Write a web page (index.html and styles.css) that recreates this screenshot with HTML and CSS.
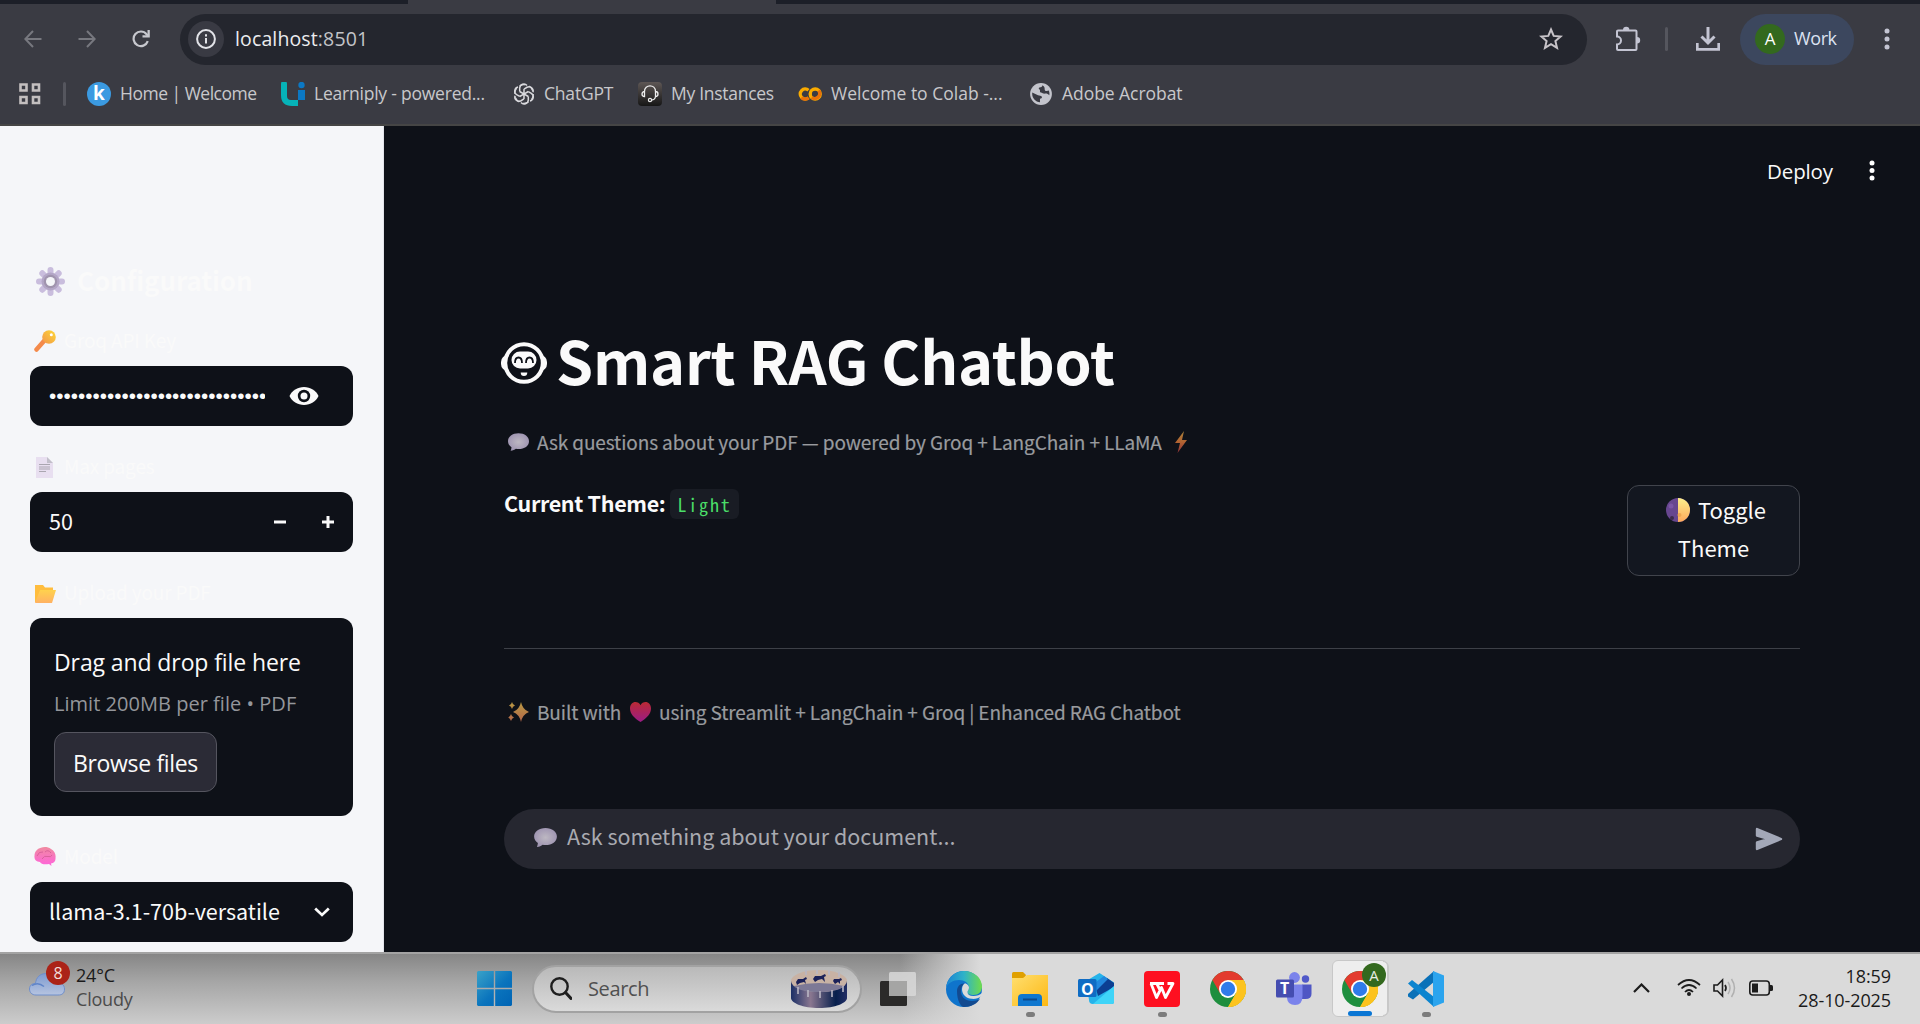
FILE: index.html
```html
<!DOCTYPE html>
<html lang="en">
<head>
<meta charset="utf-8">
<title>Smart RAG Chatbot</title>
<link rel="stylesheet" href="styles.css">
</head>
<body>
<svg width="0" height="0" class="defs" aria-hidden="true">
  <defs>
    <linearGradient id="gKey" x1="1" y1="0" x2="0" y2="1"><stop offset="0" stop-color="#fdd835"/><stop offset="1" stop-color="#f3964a"/></linearGradient>
    <linearGradient id="gFold" x1="0" y1="0" x2="0" y2="1"><stop offset="0" stop-color="#ffd24d"/><stop offset="1" stop-color="#ffb163"/></linearGradient>
    <linearGradient id="gBrain" x1="0" y1="0" x2="0" y2="1"><stop offset="0" stop-color="#f08aa0"/><stop offset="1" stop-color="#ff63dc"/></linearGradient>
    <linearGradient id="gBolt" x1="0" y1="0" x2="0" y2="1"><stop offset="0" stop-color="#a8823a"/><stop offset=".5" stop-color="#b36432"/><stop offset="1" stop-color="#8f3038"/></linearGradient>
    <linearGradient id="gHeart" x1="0" y1="0" x2="0" y2="1"><stop offset="0" stop-color="#bb2a34"/><stop offset="1" stop-color="#9a1c86"/></linearGradient>
    <linearGradient id="gStar" x1="0" y1="0" x2="0" y2="1"><stop offset="0" stop-color="#b99a43"/><stop offset="1" stop-color="#b3654a"/></linearGradient>
    <linearGradient id="gMoon" x1="0" y1="0" x2="0" y2="1"><stop offset="0" stop-color="#fdf08c"/><stop offset="1" stop-color="#ffa95c"/></linearGradient>
    <radialGradient id="gBub"><stop offset="0" stop-color="#bdb8c2"/><stop offset="1" stop-color="#a096b2"/></radialGradient>
    <linearGradient id="gWin" x1="0" y1="0" x2="1" y2="1"><stop offset="0" stop-color="#3aa2c8"/><stop offset=".55" stop-color="#0a74bd"/><stop offset="1" stop-color="#0064b4"/></linearGradient>
    <linearGradient id="gCloud" x1="0" y1="0" x2="0" y2="1"><stop offset="0" stop-color="#7d9ad0"/><stop offset="1" stop-color="#b6c4e0"/></linearGradient>
    <linearGradient id="gEdge" x1="0" y1="0" x2="1" y2="0"><stop offset="0" stop-color="#1a83d4"/><stop offset=".5" stop-color="#2fb2c8"/><stop offset="1" stop-color="#6fdc4a"/></linearGradient>
    <linearGradient id="gExp" x1="0" y1="0" x2="1" y2="1"><stop offset="0" stop-color="#ffdf70"/><stop offset="1" stop-color="#fdb813"/></linearGradient>
    <linearGradient id="gCake" x1="0" y1="0" x2="1" y2="0"><stop offset="0" stop-color="#1b2f66"/><stop offset=".35" stop-color="#8a7790"/><stop offset=".8" stop-color="#071f4c"/><stop offset="1" stop-color="#232e66"/></linearGradient>
    <linearGradient id="gInst" x1="0" y1="0" x2="0" y2="1"><stop offset="0" stop-color="#5e5755"/><stop offset="1" stop-color="#161616"/></linearGradient>
    <symbol id="chrome" viewBox="0 0 36 36">
      <circle cx="18" cy="18" r="18" fill="#1e8e3e"/>
      <path d="M18 18L2.400 9A18 18 0 0 1 33.600 9z" fill="#e33b2e"/>
      <path d="M2.400 9L10.200 22.500 18 18 18 9z" fill="#e33b2e"/>
      <path d="M18 9H33.600A18 18 0 0 1 18 36L25.800 22.500z" fill="#fcc31e"/>
      <path d="M18 36L25.800 22.500 18 18 10.200 22.500z" fill="#1e8e3e"/>
      <path d="M18 36l7.800-13.500L28 14 33.600 9A18 18 0 0 1 18 36z" fill="#fcc31e"/>
      <circle cx="18" cy="18" r="9" fill="#fff"/><circle cx="18" cy="18" r="7.200" fill="#2f7bea"/>
    </symbol>
    <symbol id="bubble" viewBox="0 0 24 20"><path d="M12 0C5 0 0 3.800 0 9c0 3 1.700 5.300 4 6.900-.1 1.600-.5 2.900-1 4.100 2.600-.2 4.600-1.300 6-2.300 1 .2 2 .3 3 .3 7 0 12-3.800 12-9S19 0 12 0z" fill="url(#gBub)"/></symbol>
  </defs>
</svg>

<header class="browser">
  <div class="tabstrip"><i class="tab"></i></div>
  <div class="toolbar">
    <svg class="nav back" viewBox="0 0 18 18"><path d="M17.500 9H1.500M9 1L1.300 9 9 17" fill="none" stroke="#77787f" stroke-width="2"/></svg>
    <svg class="nav fwd" viewBox="0 0 18 18"><path d="M.5 9h16M9 1l7.700 8L9 17" fill="none" stroke="#77787f" stroke-width="2"/></svg>
    <svg class="nav reload" viewBox="0 0 18 18"><path d="M15.800 11.200A7.300 7.300 0 1 1 14.600 4.200L16.500 6.300" fill="none" stroke="#c7c8ce" stroke-width="2.200"/><path d="M17.800 0v7.500h-7.300V5.300h5V0z" fill="#c7c8ce"/></svg>
    <div class="omnibox">
      <span class="info"><svg width="20" height="20" viewBox="0 0 20 20"><circle cx="10" cy="10" r="8.900" fill="none" stroke="#e2e3e8" stroke-width="2"/><path d="M9 9h2v5.500H9zM9 5.200h2v2.200H9z" fill="#e2e3e8"/></svg></span>
      <span class="url"><b>localhost</b>:8501</span>
      <svg class="star" width="24" height="24" viewBox="0 0 24 24"><path d="M12 2.500l2.700 6.400 6.900.6-5.200 4.500 1.600 6.800-6-3.600-6 3.600 1.600-6.800L2.400 9.500l6.900-.6z" fill="none" stroke="#c7c3c8" stroke-width="2"/></svg>
    </div>
    <svg class="puzzle" width="26" height="26" viewBox="0 0 26 26"><path d="M3 4.500h17.500a1 1 0 0 1 1 1V23a1 1 0 0 1-1 1H3a1 1 0 0 1-1-1v-4.500a3.900 3.900 0 0 0 0-8V5.500a1 1 0 0 1 1-1z" fill="none" stroke="#c3c4d2" stroke-width="2"/><path d="M8 4a3.200 3.200 0 0 1 6.400 0zM22 11a3.200 3.200 0 0 1 0 6.400z" fill="#c3c4d2"/></svg>
    <i class="vbar"></i>
    <svg class="download" width="24" height="24" viewBox="0 0 24 24"><path d="M12 0v16M5.500 9.500L12 16l6.500-6.500" fill="none" stroke="#c3c4d2" stroke-width="3"/><path d="M1.300 16v6.300h21.400V16" fill="none" stroke="#c3c4d2" stroke-width="2.700"/></svg>
    <div class="work"><span class="avatar">A</span><span class="worktext">Work</span></div>
    <svg class="menu" width="6" height="22" viewBox="0 0 6 22"><g fill="#c3c4d2"><circle cx="3" cy="3" r="2.500"/><circle cx="3" cy="11" r="2.500"/><circle cx="3" cy="19" r="2.500"/></g></svg>
  </div>
  <nav class="bookmarks">
    <svg class="apps" width="22" height="22" viewBox="0 0 22 22"><path d="M1.500 1.500h6v6h-6zM14 1.500h6v6h-6zM1.500 14h6v6h-6zM14 14h6v6h-6z" fill="none" stroke="#c3bfbf" stroke-width="2.600"/></svg>
    <i class="vbar"></i>
    <a class="bm bm1"><span class="klogo">k</span><span class="bt">Home | Welcome</span></a>
    <a class="bm bm2"><svg width="24" height="24" viewBox="0 0 24 24"><path d="M0 2a3 3 0 0 1 6 0v12q0 4 4 4h7v6h-6Q0 24 0 13z" fill="#06b3b8"/><path d="M17 8h7v10h-7z" fill="#0b78c4"/><circle cx="20.500" cy="3" r="3.200" fill="#0b78c4"/></svg><span class="bt">Learniply - powered...</span></a>
    <a class="bm bm3"><svg width="22" height="22" viewBox="-11 -11 22 22"><g fill="none" stroke="#d9d9dd" stroke-width="1.500"><path d="M-4.300-2.500V-6A4.200 4.200 0 0 1 3-8.600M-4.300-2.500L1 .6"/><path d="M-4.300-2.500V-6A4.200 4.200 0 0 1 3-8.600M-4.300-2.500L1 .6" transform="rotate(60)"/><path d="M-4.300-2.500V-6A4.200 4.200 0 0 1 3-8.600M-4.300-2.500L1 .6" transform="rotate(120)"/><path d="M-4.300-2.500V-6A4.200 4.200 0 0 1 3-8.600M-4.300-2.500L1 .6" transform="rotate(180)"/><path d="M-4.300-2.500V-6A4.200 4.200 0 0 1 3-8.600M-4.300-2.500L1 .6" transform="rotate(240)"/><path d="M-4.300-2.500V-6A4.200 4.200 0 0 1 3-8.600M-4.300-2.500L1 .6" transform="rotate(300)"/><circle r="9.300" stroke-width="1.200" stroke-dasharray="6 3.740"/></g></svg><span class="bt">ChatGPT</span></a>
    <a class="bm bm4"><svg width="24" height="24" viewBox="0 0 24 24"><rect width="24" height="24" rx="4" fill="url(#gInst)"/><path d="M6.500 9.500C6.500 2 17.500 2 17.500 9.500M6.500 9.500a2.500 2.500 0 0 0 0 5zM17.500 9.500a2.500 2.500 0 0 1 0 5zM17.500 14.500q-.5 3.500-4 3.500" fill="none" stroke="#eee" stroke-width="1.300"/><circle cx="12" cy="18" r="1.600" fill="none" stroke="#eee" stroke-width="1.200"/></svg><span class="bt">My Instances</span></a>
    <a class="bm bm5"><svg width="24" height="14" viewBox="0 0 24 14"><path d="M10.500 3.200A5 5 0 1 0 10.500 10.800" fill="none" stroke="#f9ab00" stroke-width="3.400"/><circle cx="17.200" cy="7" r="5" fill="none" stroke="#f9ab00" stroke-width="3.400"/><path d="M3.500 10.500A5 5 0 0 0 10.500 10.800M20.700 3.500A5 5 0 0 1 13.700 10.500" fill="none" stroke="#e8710a" stroke-width="3.400"/></svg><span class="bt">Welcome to Colab -...</span></a>
    <a class="bm bm6"><svg width="22" height="22" viewBox="0 0 22 22"><circle cx="11" cy="11" r="10.900" fill="#c3c4cc"/><path d="M2.200 9.500L8 12.200c1.500.6 3 .3 3.700 1.200.8 1-.2 2.300-1.700 2.400v3.500C5.500 19 2.200 15 2.200 11zM12.500 2.300c-.3 1.700-1.500 2.200-3 2.200-1 0-1 1.700 0 2 1.200.5-.3 2.700 1.300 2.900 1.700.2 2.500 1.500 4.200 1.200 1.500-.3 3 .2 4.300 1.600.3-1.400.2-3-.5-4.600-1.500.7-3.500.7-4-.7-.3-1.500.5-2.700-2.300-4.600z" fill="#393a43"/></svg><span class="bt">Adobe Acrobat</span></a>
  </nav>
</header>

<div class="app">
  <aside class="sidebar">
    <h2 class="side-title"><svg width="29" height="29" viewBox="-14.500 -14.500 29 29"><g stroke="#c9bddd" stroke-width="6" stroke-linecap="round"><path d="M0-11.500V11.500M-11.500 0H11.500M-8.200-8.200L8.200 8.200M-8.200 8.200L8.200-8.200"/></g><circle r="9" fill="#b3a6c6"/><circle r="6.700" fill="#a094ae"/><circle r="4.500" fill="#f5f6f9"/></svg><span class="ghost">Configuration</span></h2>
    <label class="lab"><svg width="22" height="22" viewBox="0 0 22 22"><path d="M10 11L2.500 19.500" stroke="#f48a4b" stroke-width="4.500" stroke-linecap="round"/><circle cx="15" cy="7" r="6.800" fill="url(#gKey)"/><circle cx="17.300" cy="4.700" r="1.500" fill="#fff"/></svg><span class="ghost">Groq API Key</span></label>
    <div class="field"><span class="dots">••••••••••••••••••••••••••••••</span><svg class="eye" width="30" height="20" viewBox="0 0 30 20"><path d="M15 1C8.500 1 3 4.600.5 10 3 15.400 8.500 19 15 19s12-3.600 14.500-9C27 4.600 21.500 1 15 1z" fill="#fafafa"/><circle cx="15" cy="10" r="6.200" fill="#0e1118"/><circle cx="15" cy="10" r="3.500" fill="#fafafa"/></svg></div>
    <label class="lab"><svg width="22" height="22" viewBox="0 0 22 22"><path d="M2 1h11l6 6v15H2z" fill="#e8dff0"/><path d="M13 1l6 6h-6z" fill="#c2bfca"/><path d="M5 8.500h11M5 11h11M5 13h11M5 15.500h7" stroke="#aaa6b0" stroke-width="1.200"/></svg><span class="ghost">Max pages</span></label>
    <div class="field"><span class="val">50</span><svg class="pm" width="60" height="12" viewBox="0 0 60 12"><path d="M0 6h12M48 6h12M54 0v12" stroke="#fafafa" stroke-width="3"/></svg></div>
    <label class="lab"><svg width="22" height="22" viewBox="0 0 22 22"><path d="M1 3h8l2 2.500h8V12L4 20H1z" fill="#ffbd3e"/><path d="M6 8h16l-4 13H1z" fill="url(#gFold)"/></svg><span class="ghost">Upload your PDF</span></label>
    <section class="drop">
      <p class="drag">Drag and drop file here</p>
      <p class="limit">Limit 200MB per file • PDF</p>
      <button class="browse">Browse files</button>
    </section>
    <label class="lab"><svg width="22" height="20" viewBox="0 0 22 20"><path d="M7 .8C10-.4 14-.2 17 2c4 2 5 6 4.500 9 .3 3-1.500 5-4.500 5.500L17.500 19 15 17c-4 .6-8 .5-9-2-4-.5-6-2.500-5.500-6C.5 5 3 1.700 7 .8z" fill="url(#gBrain)"/><path d="M3 9q2-5 6-4M8 12q2-4 6-2.500 3 1 4-1.500M11 5q3-3 6 1" fill="none" stroke="#d9629c" stroke-width="1"/></svg><span class="ghost">Model</span></label>
    <div class="field"><span class="val model">llama-3.1-70b-versatile</span><svg class="chev" width="18" height="12" viewBox="0 0 18 12"><path d="M2.200 2.500L9 9l6.800-6.500" fill="none" stroke="#fafafa" stroke-width="2.700"/></svg></div>
  </aside>

  <main class="main">
    <div class="topbar"><span class="deploy">Deploy</span><svg width="6" height="22" viewBox="0 0 6 22"><g fill="#fff"><circle cx="3" cy="3" r="2.500"/><circle cx="3" cy="10.500" r="2.500"/><circle cx="3" cy="18" r="2.500"/></g></svg></div>
    <div class="content">
      <h1 class="title"><svg width="46" height="42" viewBox="0 0 46 42"><rect x="0" y="13" width="46" height="16" rx="7" fill="#fafafa"/><circle cx="23" cy="21" r="18.800" fill="#0e1118" stroke="#fafafa" stroke-width="4"/><rect x="10.500" y="9.500" width="25" height="17" rx="8.500" fill="#fafafa"/><path d="M14 21q0-5.500 3.500-5.500T21 21M25 21q0-5.500 3.500-5.500T32 21" fill="none" stroke="#0e1118" stroke-width="1.800"/><path d="M19.700 30.500h6.600q0 3.500-3.300 3.500t-3.300-3.500z" fill="#fafafa"/></svg><span>Smart RAG Chatbot</span></h1>
      <p class="caption cap1"><svg width="21" height="18"><use href="#bubble" width="21" height="18"/></svg><span>Ask questions about your PDF — powered by Groq + LangChain + LLaMA</span><svg class="bolt" width="14" height="22" viewBox="0 0 14 22"><path d="M10 0L1 12h5l-2.500 10L13 9H8z" fill="url(#gBolt)"/></svg></p>
      <div class="row">
        <p class="theme"><b>Current Theme:</b><code>Light</code></p>
        <button class="toggle"><span class="tl"><svg width="24" height="24" viewBox="0 0 24 24"><circle cx="12" cy="12" r="12" fill="#67468f"/><path d="M12 0a12 12 0 0 1 0 24z" fill="url(#gMoon)"/><circle cx="6" cy="20" r="2" fill="#3b2a4a"/><circle cx="13.500" cy="17" r="2" fill="#f0a850"/><circle cx="5" cy="8" r="2.500" fill="#7a55a5"/></svg><span>Toggle</span></span><span>Theme</span></button>
      </div>
      <hr>
      <p class="caption cap2"><svg width="21" height="20" viewBox="0 0 21 20"><path d="M13 0q1.500 7.500 8 10-6.500 2.500-8 10-1.500-7.500-8-10 6.500-2.500 8-10zM4 0q.7 3 3 3.500Q4.700 4 4 7 3.300 4 1 3.500 3.300 3 4 0zM3 12q.8 3 3 3.500-2.200.5-3 3.500-.8-3-3-3.500 2.200-.5 3-3.500z" fill="url(#gStar)"/></svg><span class="built">Built with</span><svg width="21" height="20" viewBox="0 0 21 20"><path d="M10.500 20C4 16 0 11.500 0 6.500 0 2.500 2.500 0 5.500 0c2 0 4 1.200 5 3.200 1-2 3-3.200 5-3.200 3 0 5.500 2.500 5.500 6.500 0 5-4 9.500-10.500 13.500z" fill="url(#gHeart)"/></svg><span>using Streamlit + LangChain + Groq | Enhanced RAG Chatbot</span></p>
      <div class="chat"><svg width="23" height="19"><use href="#bubble" width="23" height="19"/></svg><span class="ph">Ask something about your document...</span><svg class="send" width="28" height="24" viewBox="0 0 28 24"><path d="M2 2l24 10L2 22v-6.500L14 12 2 8.500z" fill="#a3a8b8" stroke="#a3a8b8" stroke-width="2.400" stroke-linejoin="round"/></svg></div>
    </div>
  </main>
</div>

<footer class="taskbar">
  <div class="weather"><div class="wicon"><svg width="36" height="23" viewBox="0 0 36 23"><path d="M7 22C3 22 .5 19.500.5 16S3 10.500 6.500 10.500C7 4.500 11 .5 17 .5s9 3.500 10 9c5 0 8.500 2 8.500 6.500S33 22 29 22z" fill="url(#gCloud)" stroke="#6e8ecb"/><path d="M3 12.500q6-4 12 1" fill="none" stroke="#5f84c8" stroke-width="1.500"/></svg><span class="badge">8</span></div><div class="wtext"><span>24°C</span><span class="dim">Cloudy</span></div></div>
  <div class="dock">
    <svg class="win" width="35" height="35" viewBox="0 0 35 35"><path d="M1 0h15.800v16.800H0V1zM18.200 0H34l1 1v15.800H18.200zM0 18.200h16.800V35H1l-1-1zM18.200 18.200H35V34l-1 1H18.200z" fill="url(#gWin)"/></svg>
    <div class="search"><svg width="22" height="23" viewBox="0 0 22 23"><circle cx="9.500" cy="9.500" r="8.200" fill="none" stroke="#1e1e1e" stroke-width="2.400"/><path d="M15.500 15.500L21 21.500" stroke="#1e1e1e" stroke-width="3" stroke-linecap="round"/></svg><span class="stext">Search</span>
      <svg class="cake" width="56" height="38" viewBox="0 0 56 38"><path d="M0 11v17c0 5 12 10 28 10s28-5 28-10V11z" fill="url(#gCake)"/><ellipse cx="28" cy="11" rx="28" ry="11" fill="#c8b2a4"/><path d="M3 16Q28 10 53 16 47 22 28 22T3 16z" fill="#7d7996"/><path d="M7 17v7M17 20v7M29 21v7M41 20v7M52 16v6M15 0v5M26-1v5M38 0v5M48 2v5" stroke="#b9b6c4" stroke-width="1.600"/><path d="M5 12l2-3h5l3-2 1 2-2 1 1 4-2-2-4 1-3 2zM22 9l2-3h6l4-2 1 2-2 1 1 5-3-3-4 1-3 2zM42 11l1-2h5l2-1 1 2-2 1v3l-2-2-3 2z" fill="#1b2159"/></svg></div>
    <svg class="tv" width="36" height="34" viewBox="0 0 36 34"><rect y="9" width="27" height="25" rx="1.500" fill="#2b2a29"/><rect x="9" y="0" width="27" height="24" rx="1.500" fill="#d8d8d8" fill-opacity=".85"/><rect x="9" y="9" width="18" height="15" fill="#a5a5a4"/></svg>
    <div class="ic"><svg width="36" height="36" viewBox="0 0 36 36"><circle cx="18" cy="18" r="18" fill="#0f74cc"/><path d="M0 17C1 7 9 0 18 0c10 0 18 7 18 15.500 0 5-3.500 8.500-8.500 8.500-3.500 0-6-1-6-3 0-1.500 1.500-2 1.500-4.500C23 12 18.500 9 13 9 7 9 2 12 0 17z" fill="url(#gEdge)"/><path d="M11 20c0-5 3.500-8 8-7.500-6 2.500-6.500 17.500 7 17.500 3 0 5.500-.8 8-2.200C31 33 25 36 18 36c-3 0-7-6-7-16z" fill="#124a90"/><path d="M19 12.300c-5 3-4 14.500 6.500 15.500 4 .4 7-.8 9.500-2.300l1 1.500V22c-2 2-5 3-8.500 3-4 0-6-1.500-6-4 0-1.500 1.500-2 1.500-4.500 0-1.700-1.500-3.600-4-4.200z" fill="#dadada"/></svg></div>
    <div class="ic"><svg width="36" height="34" viewBox="0 0 36 34"><path d="M0 1.500Q0 0 1.500 0H11l3 3-2 4H0z" fill="#e0a000"/><path d="M0 6h11l4-3h21v31H0z" fill="url(#gExp)"/><path d="M6 34V26q0-4 4-4h16q4 0 4 4v8z" fill="#0f77cf"/><path d="M11 27.500h14" stroke="#0a4b8e" stroke-width="2"/></svg><i class="run"></i></div>
    <div class="ic"><svg width="36" height="32" viewBox="0 0 36 32"><path d="M8 8L21.500 0 36 9.500V29q0 2-2 2H15q-4 0-4-4z" fill="#26b3ea"/><path d="M18 16L29 5l7 5v4L20 23z" fill="#0c3f92"/><path d="M14 12l12-9 4 3-12 12z" fill="#2389de"/><path d="M36 13v16q0 2-2 2H15z" fill="#3fd4f8"/><rect x="0" y="6" width="18.500" height="18" rx="1.500" fill="#0f6cc4"/></svg><span class="glyph go">O</span></div>
    <div class="ic"><svg width="36" height="36" viewBox="0 0 36 36"><rect width="36" height="36" rx="4" fill="#fe1020"/><path d="M6 12.500h14M7 12.500L12.500 26.500 17.500 16.500 21.500 26.500 29 12.500H23.500M13 13l3 6" fill="none" stroke="#fff" stroke-width="2.800" stroke-linejoin="round"/></svg><i class="run"></i></div>
    <div class="ic"><svg width="36" height="36"><use href="#chrome"/></svg></div>
    <div class="ic"><svg width="36" height="34" viewBox="0 0 36 34"><circle cx="29.500" cy="7" r="3.700" fill="#5059c9"/><path d="M26 12.500h9.500V22q0 5-6 5H26z" fill="#4f56c4"/><circle cx="18.500" cy="5.500" r="5.400" fill="#7b83eb"/><path d="M11 12.500h15.500V24q0 9-7.500 9t-8-7z" fill="#7b83eb"/><rect y="7.500" width="18" height="18" rx="1.500" fill="#454db0"/></svg><span class="glyph gt">T</span></div>
    <div class="ic act"><i class="sheet"></i><svg width="36" height="36"><use href="#chrome"/></svg><span class="abadge">A</span><i class="run on"></i></div>
    <div class="ic"><svg width="36" height="36" viewBox="0 0 36 36"><path d="M26 0L26.500 10.500 5 28.500 0 25.500V23z" fill="#0a71b8"/><path d="M0 12.500L4 9l22 17v10z" fill="#0b84cf"/><path d="M25 0l11 4.500v27L25 36z" fill="#2ba4ee"/></svg><i class="run"></i></div>
  </div>
  <div class="tray">
    <svg class="up" width="17" height="10" viewBox="0 0 17 10"><path d="M1 9l7.500-7.500L16 9" fill="none" stroke="#1c1c1c" stroke-width="2.200"/></svg>
    <svg class="wifi" width="24" height="17" viewBox="0 0 24 17"><path d="M1 6q11-10 22 0M4.500 9.500q7.500-7 15 0M8 13q4-4 8 0" fill="none" stroke="#1c1c1c" stroke-width="1.700"/><circle cx="12" cy="15" r="2" fill="#1c1c1c"/></svg>
    <svg class="vol" width="24" height="20" viewBox="0 0 24 20"><path d="M1 7h3.500L9.500 2v16l-5-5H1z" fill="none" stroke="#1c1c1c" stroke-width="1.600"/><path d="M12 7q2 3 0 6" fill="none" stroke="#1c1c1c" stroke-width="1.700"/><path d="M15 4q4 6 0 12M18.500 1q6 9 0 18" fill="none" stroke="#b0b0b0" stroke-width="1.500"/></svg>
    <svg class="bat" width="24" height="16" viewBox="0 0 24 16"><rect x=".8" y="1" width="19.500" height="14" rx="3" fill="none" stroke="#1c1c1c" stroke-width="1.600"/><rect x="3" y="3.500" width="6" height="9" fill="#1c1c1c"/><path d="M21 5h1.500q1.500 0 1.500 1.500v3Q24 11 22.500 11H21z" fill="#1c1c1c"/></svg>
    <div class="clock"><span>18:59</span><span>28-10-2025</span></div>
  </div>
</footer>
</body>
</html>
```
FILE: styles.css
```css
* { box-sizing: border-box; }
body { margin: 0; width: 1920px; height: 1024px; overflow: hidden; display: flex; flex-direction: column; background: #0e1118; font-family: "Open Sans", "Noto Sans", sans-serif; }
h1, h2, p { margin: 0; }
svg { display: block; flex: none; }
span, b, p { white-space: nowrap; }
button { font: inherit; color: inherit; padding: 0; }
.defs { position: absolute; }

/* Browser chrome */
.browser { height: 126px; flex: none; background: #3a3b43; border-bottom: 2px solid #454545; display: flex; flex-direction: column; }
.tabstrip { height: 4px; background: #1c1f28; padding-left: 408px; }
.tab { display: block; width: 368px; height: 4px; background: #3a3b43; }
.toolbar { height: 70px; display: flex; align-items: center; background: #3a3b43; }
.nav { width: 18px; height: 18px; }
.back { margin-left: 24px; }
.fwd, .reload { margin-left: 36px; }
.omnibox { margin-left: 30px; width: 1407px; height: 51px; border-radius: 26px; background: #24262e; display: flex; align-items: center; padding: 0 24px 0 8px; }
.info { width: 36px; height: 36px; border-radius: 50%; background: #393a43; display: grid; place-items: center; }
.url { margin-left: 11px; padding-bottom: 2px; font-size: 19.500px; letter-spacing: .13px; color: #c3c4c8; }
.url b { font-weight: 400; color: #ececee; }
.star { margin-left: auto; }
.puzzle { margin-left: 28px; }
.vbar { width: 3px; height: 24px; border-radius: 2px; background: #55565e; }
.toolbar .vbar { margin-left: 24px; }
.download { margin-left: 28px; }
.work { margin-left: 20px; width: 114px; height: 51px; border-radius: 26px; background: #3c475e; display: flex; align-items: center; padding-left: 15px; color: #dce2f2; font-size: 18px; }
.worktext { letter-spacing: -.4px; padding-bottom: 2px; }
.avatar { width: 30px; height: 30px; border-radius: 50%; background: #33691e; color: #fff; font-size: 17px; line-height: 30px; text-align: center; margin-right: 9px; }
.menu { margin-left: 30px; }
.bookmarks { height: 40px; display: flex; align-items: center; color: #c8c8cb; font-size: 17.500px; }
.apps { margin-left: 19px; }
.bookmarks .vbar { margin-left: 22px; }
.bm { display: flex; align-items: center; gap: 9px; }
.bt { padding-bottom: 2px; }
.bm1 { margin-left: 21px; width: 194px; letter-spacing: -.5px; }
.bm2 { width: 232px; letter-spacing: -.22px; }
.bm3 { width: 125px; letter-spacing: -.2px; }
.bm4 { width: 160px; letter-spacing: -.28px; }
.bm5 { width: 232px; }
.bm6 { gap: 10px; letter-spacing: -.05px; }
.klogo { width: 24px; height: 24px; border-radius: 50%; background: #3b9ae1; color: #fff; font: bold 19px/23px "Open Sans", sans-serif; text-align: center; letter-spacing: 0; }

/* Streamlit app */
.app { height: 826px; display: flex; font-family: "Noto Sans CJK SC", "Noto Sans CJK JP", sans-serif; color: #fafafa; }
.sidebar { width: 384px; background: #f5f6f9; border-right: 1px solid #e2e4ea; padding: 136px 30px 0; overflow: hidden; }
.ghost { color: #fafafa; padding-bottom: 2px; }
.side-title { display: flex; align-items: center; gap: 12px; height: 38px; padding-left: 6px; font-size: 26px; letter-spacing: -.1px; line-height: 38px; font-weight: 700; }
.lab { display: flex; align-items: center; gap: 8px; height: 30px; margin: 26px 0 10px; padding-left: 4px; font-size: 19px; line-height: 28px; letter-spacing: -.15px; }
.field { height: 60px; width: 323px; border-radius: 12px; background: #0e1118; display: flex; align-items: center; padding-left: 19px; font-size: 21.500px; }
.dots { width: 216px; overflow: hidden; font: 20.700px/30px "Liberation Sans", sans-serif; }
.eye { margin-left: 24px; }
.val { width: 225px; line-height: 58px; padding-bottom: 3px; }
.model { width: 264px; }
.drop { height: 198px; width: 323px; border-radius: 12px; background: #0e1118; padding: 24px; font-family: "Open Sans", sans-serif; }
.drag { font-size: 23px; line-height: 40px; height: 42px; letter-spacing: -.1px; }
.limit { font-size: 20px; line-height: 40px; height: 48px; color: #94969b; letter-spacing: .03px; }
.browse { display: block; width: 163px; height: 60px; border: 1px solid #55555f; border-radius: 12px; background: #2b2b36; font-size: 23px; letter-spacing: -.33px; padding-top: 2px; }

.main { width: 1536px; background: #0e1118; }
.topbar { height: 90px; display: flex; align-items: center; justify-content: flex-end; padding-right: 45px; gap: 36px; font: 20.500px "Open Sans", sans-serif; }
.deploy { letter-spacing: -.12px; }
.content { padding: 0 120px; }
.title { margin-top: 106px; height: 80px; display: flex; align-items: center; gap: 9px; font-size: 59.500px; line-height: 76px; letter-spacing: -.25px; font-weight: 700; margin-left: -3px; }
.title svg { margin-top: 2px; }
.title span { padding-bottom: 6px; }
.caption { display: flex; align-items: center; color: #999b9f; font-size: 19px; line-height: 30px; height: 30px; gap: 8px; padding-left: 4px; letter-spacing: -.11px; -webkit-text-stroke: .2px #999b9f; }
.cap1 { margin-top: 25px; }
.bolt { margin-left: 4px; }
.row { margin-top: 28px; display: flex; justify-content: space-between; height: 91px; }
.theme { display: flex; align-items: center; gap: 4px; height: 38px; font-size: 21.500px; }
.theme b { letter-spacing: -.33px; padding-bottom: 3px; }
code { width: 69px; height: 30px; border-radius: 6px; background: #191c24; color: #4ade68; font: 18px/31px "Noto Sans Mono CJK SC", "DejaVu Sans Mono", monospace; letter-spacing: 1.800px; padding-left: 8px; }
.toggle { width: 173px; height: 91px; border: 1px solid #41444c; border-radius: 12px; background: #131720; display: flex; flex-direction: column; align-items: center; font-size: 22px; line-height: 38px; padding-top: 4px; }
.tl { display: flex; align-items: center; gap: 8px; padding-left: 5px; }
.tl svg { margin-top: 1px; }
hr { border: 0; height: 1px; background: #3d4047; margin: 72px 0 0; }
.cap2 { margin-top: 48px; }
.built { width: 85px; }
.chat { margin-top: 82px; height: 60px; border-radius: 30px; background: #262730; display: flex; align-items: center; padding: 0 17px 0 30px; font-size: 21.500px; color: #a9aab0; gap: 10px; }
.chat svg:first-child { margin-bottom: 4px; }
.ph { line-height: 40px; padding-bottom: 6px; }
.send { margin-left: auto; }

/* Windows taskbar */
.taskbar { height: 72px; display: flex; color: #1a1a1a; font-size: 18px; border-top: 2px solid #a3a3a3; background: linear-gradient(90deg, transparent 900px, #dadada 980px), linear-gradient(#868686, #a6a6a6 40%, #cccccc); }
.weather { width: 477px; display: flex; padding: 18px 0 0 29px; gap: 11px; }
.wicon { width: 36px; height: 40px; position: relative; padding-top: 1px; }
.badge { position: absolute; left: 17px; top: -11px; width: 24px; height: 24px; border-radius: 50%; background: #ab2318; color: #f2dcd9; font-size: 16px; line-height: 24px; text-align: center; }
.wtext { display: flex; flex-direction: column; line-height: 24px; margin-top: -9px; letter-spacing: -.2px; }
.dim { color: #4b4b4b; }
.dock { width: 1156px; display: flex; align-items: center; padding-bottom: 1px; }
.search { margin-left: 20px; width: 330px; height: 48px; border: 2px solid #a2a2a2; border-radius: 24px; background: linear-gradient(#b9b9b9, #dadada); display: flex; align-items: center; padding: 0 13px 0 16px; }
.stext { margin-left: 16px; padding-bottom: 1px; font-size: 20px; letter-spacing: -.35px; color: #505050; }
.cake { margin-left: auto; }
.tv { margin-left: 18px; margin-right: 20px; }
.ic { width: 56px; height: 57px; margin-right: 10px; display: grid; place-items: center; position: relative; }
.run { position: absolute; left: 24px; bottom: 0; width: 9px; height: 5px; border-radius: 3px; background: #7c7c7c; }
.run.on { left: 15px; width: 24px; background: #0a76d4; }
.glyph { position: absolute; color: #fff; font-weight: 700; font-size: 16px; }
.go { left: 13px; top: 18px; }
.gt { left: 14px; top: 17px; }
.act { background: #eeeeee; border-radius: 6px; border: 1px solid #c8c8c8; }
.sheet { position: absolute; left: 50px; top: 0; width: 6px; height: 55px; border: 1px solid #c8c8c8; border-left: 0; border-radius: 0 6px 6px 0; }
.abadge { position: absolute; left: 29px; top: 2px; width: 24px; height: 24px; border-radius: 50%; background: #33691e; color: #e8ede5; font-size: 15px; line-height: 24px; text-align: center; }
.tray { display: flex; align-items: center; padding-bottom: 3px; }
.wifi { margin-left: 27px; }
.vol, .bat { margin-left: 12px; }
.clock { width: 118px; display: flex; flex-direction: column; line-height: 24px; align-items: flex-end; letter-spacing: -.1px; }
```
